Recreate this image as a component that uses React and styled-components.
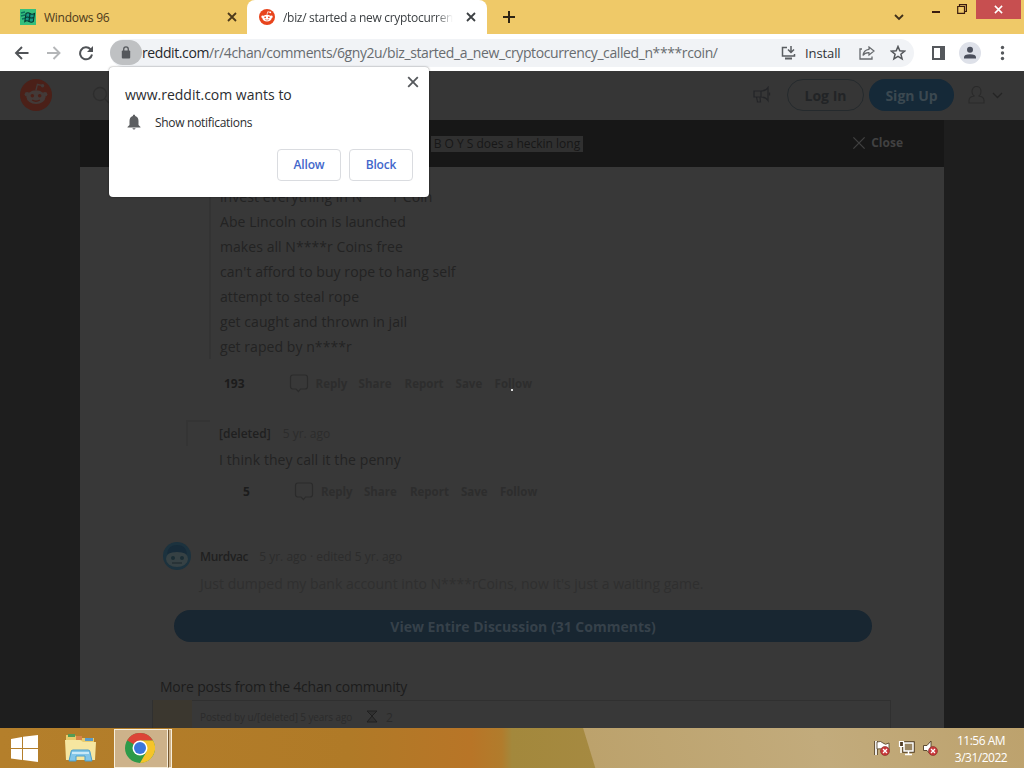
import React from 'react'
import styled, { createGlobalStyle } from 'styled-components'

const QUOTE = [
    'invest everything in N****r Coin',
    'Abe Lincoln coin is launched',
    'makes all N****r Coins free',
    "can't afford to buy rope to hang self",
    'attempt to steal rope',
    'get caught and thrown in jail',
    'get raped by n****r'
]
const ACTIONS = [
    ['Reply', 43],
    ['Share', 46],
    ['Report', 51],
    ['Save', 39],
    ['Follow', 46]
]

const Cross = ({ size, color, width = 2 }) => (
    <svg width={size} height={size} viewBox='0 0 10 10'>
        <path d='M1 1l8 8M9 1l-8 8' stroke={color} strokeWidth={width} />
    </svg>
)

const Snoo = ({ size, bg, face, eye }) => (
    <svg width={size} height={size} viewBox='0 0 20 20'>
        <circle cx='10' cy='10' r='10' fill={bg} />
        <path d='M10 7l.9-3.6 2.7.6' fill='none' stroke={face} strokeWidth='.9' />
        <circle cx='14.1' cy='4.2' r='1.1' fill={face} />
        <circle cx='4.4' cy='9.6' r='1.5' fill={face} />
        <circle cx='15.6' cy='9.6' r='1.5' fill={face} />
        <ellipse cx='10' cy='11.4' rx='5.9' ry='4.3' fill={face} />
        <circle cx='7.7' cy='10.4' r='1.1' fill={eye} />
        <circle cx='12.3' cy='10.4' r='1.1' fill={eye} />
        <path d='M7.6 13.1q2.4 1.6 4.8 0' fill='none' stroke={eye} strokeWidth='.8' />
    </svg>
)

const Win96Icon = () => (
    <svg width='16' height='16' viewBox='0 0 16 16'>
        <rect width='16' height='16' fill='#35bf7c' />
        <path d='M1 4l4-1M1 7l4-1M2 10l4-1' stroke='#0a7260' strokeWidth='1.3' />
        <path
            d='M6 4.500q2-1.400 4 0t4.500 0l-1.200 8q-2 1.400-4.200 0t-4.300 0z'
            fill='#179a86'
            stroke='#06382f'
            strokeWidth='1.100'
        />
        <path d='M10 4.500l-1 8M5.400 8.500q2-1 4 0t4.400 0' fill='none' stroke='#06382f' strokeWidth='1.200' />
    </svg>
)

const ActionRow = () => (
    <Actions>
        <svg width='20' height='20' viewBox='0 0 20 20'>
            <path
                d='M4 2h12q2.500 0 2.500 2.500v9q0 2.500-2.500 2.500h-4.500L9.500 18.500 7 16H4q-2.500 0-2.500-2.500v-9Q1.500 2 4 2z'
                fill='none'
                stroke='#2b2b2b'
                strokeWidth='1.200'
            />
        </svg>
        <div>
            {ACTIONS.map(([label, w]) => (
                <Action key={label} $w={w}>
                    {label}
                </Action>
            ))}
        </div>
    </Actions>
)

const Tabs = () => (
    <TabStrip>
        <Tab>
            <Win96Icon />
            <Txt $track={-0.25}>Windows 96</Txt>
            <Cross size={10} color='#4d3a1c' width={1.8} />
        </Tab>
        <Tab $active>
            <Snoo size={16} bg='#e8441c' face='#fff' eye='#e8441c' />
            <TabTitle>/biz/ started a new cryptocurren</TabTitle>
            <Cross size={10} color='#3c4043' width={1.8} />
        </Tab>
        <NewTab width='12' height='12' viewBox='0 0 12 12'>
            <path d='M6 0v12M0 6h12' stroke='#2e2414' strokeWidth='2' />
        </NewTab>
        <WindowButtons>
            <svg width='10' height='7' viewBox='0 0 10 7'>
                <path d='M1 1l4 4 4-4' fill='none' stroke='#40301a' strokeWidth='1.8' />
            </svg>
            <svg width='8' height='2'>
                <path d='M0 1h8' stroke='#3a1c10' strokeWidth='2' />
            </svg>
            <svg width='10' height='10' viewBox='0 0 10 10'>
                <path d='M.7 2.500h6.800v6.800H.7zM2.500 2V.6h6.900v6.900H8' fill='none' stroke='#3a1c10' strokeWidth='1.2' />
            </svg>
            <CloseWindow>
                <Cross size={9} color='#fff' width={1.7} />
            </CloseWindow>
        </WindowButtons>
    </TabStrip>
)

const AddressBar = () => (
    <Toolbar>
        <NavIcons width='80' height='16' viewBox='0 0 80 16'>
            <path d='M14.500 8H2M8 2L2 8l6 6' fill='none' stroke='#505357' strokeWidth='1.900' />
            <path d='M33 8h12.500M39.500 2l6 6-6 6' fill='none' stroke='#b4b6b8' strokeWidth='1.900' />
            <path d='M76.500 4.200A6 6 0 1 0 78 9.500' fill='none' stroke='#505357' strokeWidth='2' />
            <path d='M79 1v6h-6z' fill='#505357' />
        </NavIcons>
        <Omnibox>
            <Lock>
                <svg width='10' height='13' viewBox='0 0 10 13'>
                    <rect x='.8' y='4.500' width='8.400' height='8' rx='1' fill='#55585c' />
                    <path d='M2.700 5V3.200a2.300 2.300 0 0 1 4.600 0V5' fill='none' stroke='#55585c' strokeWidth='1.300' />
                </svg>
            </Lock>
            <Url>
                <b>reddit.com</b>/r/4chan/comments/6gny2u/biz_started_a_new_cryptocurrency_called_n****rcoin/
            </Url>
            <svg width='15' height='14' viewBox='0 0 15 14'>
                <path d='M6 1.500H1.500v8.500h12V8' fill='none' stroke='#5a5d61' strokeWidth='1.500' />
                <path d='M10 0v6M7 3.500l3 3 3-3' fill='none' stroke='#5a5d61' strokeWidth='1.500' />
                <path d='M4 12.500h7' stroke='#5a5d61' strokeWidth='2' />
            </svg>
            <Install>Install</Install>
            <svg width='16' height='14' viewBox='0 0 16 14'>
                <path d='M3 3H1v10h12v-2.500' fill='none' stroke='#66696d' strokeWidth='1.300' />
                <path d='M10 1l5 4-5 4V6.700Q6 6.500 4 9.500 4.500 4 10 3.300z' fill='none' stroke='#66696d' strokeWidth='1.200' />
            </svg>
            <Star width='16' height='16' viewBox='0 0 16 16'>
                <path
                    d='M8 1.500l1.800 4.300 4.700.4-3.600 3 1.200 4.600L8 11.300l-4.100 2.500 1.200-4.600-3.600-3 4.700-.4z'
                    fill='none'
                    stroke='#55585c'
                    strokeWidth='1.500'
                />
            </Star>
        </Omnibox>
        <BarIcons width='80' height='22' viewBox='0 0 80 22'>
            <path d='M3 5h11v12H3z' fill='#fff' stroke='#55585c' strokeWidth='2' />
            <path d='M10 4h5v14h-5z' fill='#55585c' />
            <circle cx='40' cy='11' r='11' fill='#dee1e9' />
            <circle cx='40' cy='7.700' r='3' fill='#4b4f5c' />
            <path d='M34 16.500v-1.200q0-3 6-3t6 3v1.200z' fill='#4b4f5c' />
            <circle cx='72.500' cy='5.500' r='1.700' fill='#55585c' />
            <circle cx='72.500' cy='11' r='1.700' fill='#55585c' />
            <circle cx='72.500' cy='16.500' r='1.700' fill='#55585c' />
        </BarIcons>
    </Toolbar>
)

const PermissionPrompt = () => (
    <Prompt>
        <DismissButton>
            <Cross size={12} color='#55585c' width={1.500} />
        </DismissButton>
        <PromptTitle>www.reddit.com wants to</PromptTitle>
        <PromptRow>
            <svg width='14' height='16' viewBox='0 0 14 16'>
                <path
                    d='M7 .5q1.200 0 1.200 1.500Q11.500 3 11.500 7v4l2 2v.6H.5V13l2-2V7q0-4 3.300-5Q5.800.5 7 .5zM5.400 14.200h3.200Q8.300 15.600 7 15.600t-1.600-1.400z'
                    fill='#5c5e61'
                />
            </svg>
            <Txt $track={-0.3}>Show notifications</Txt>
        </PromptRow>
        <PromptButtons>
            <PromptButton>Allow</PromptButton>
            <PromptButton>Block</PromptButton>
        </PromptButtons>
    </Prompt>
)

const RedditHeader = () => (
    <SiteHeader>
        <Snoo size={32} bg='#4b2018' face='#433a38' eye='#4b2018' />
        <Search width='18' height='18' viewBox='0 0 18 18'>
            <circle cx='8' cy='8' r='6.500' fill='none' stroke='#2d2d2d' strokeWidth='1.300' />
            <path d='M13 13l4 4' stroke='#2d2d2d' strokeWidth='1.300' />
        </Search>
        <Horn width='18' height='18' viewBox='0 0 18 18'>
            <path
                d='M1 5h7q5 0 7-3.500v13Q13 11 8 11H1zM3.500 11l1 5h3l-.5-5M8 5v6M16.500 6.500v3'
                fill='none'
                stroke='#242528'
                strokeWidth='1.200'
            />
        </Horn>
        <LogIn>Log In</LogIn>
        <SignUp>Sign Up</SignUp>
        <UserMenu width='36' height='20' viewBox='0 0 36 20'>
            <path
                d='M5 6a4.500 4.500 0 0 1 9 0q0 4-2.500 5 5.500.5 5.500 4.500v2.500H2v-2.500Q2 11.500 7.500 11 5 10 5 6z'
                fill='none'
                stroke='#2a2a2a'
                strokeWidth='1.100'
            />
            <path d='M26 8l4.500 4.500L35 8' fill='none' stroke='#242424' strokeWidth='1.300' />
        </UserMenu>
    </SiteHeader>
)

const Comments = () => (
    <Sheet>
        <Quote>
            {QUOTE.map((line) => (
                <p key={line}>{line}</p>
            ))}
        </Quote>
        <VoteRow $top={14} $left={144}>
            <Score>193</Score>
            <ActionRow />
        </VoteRow>
        <DeletedComment>
            <GhostAvatar />
            <Meta>
                <b>[deleted]</b>
                <time>5 yr. ago</time>
            </Meta>
        </DeletedComment>
        <Body>I think they call it the penny</Body>
        <VoteRow $top={11} $left={163} $gap={44}>
            <Score>5</Score>
            <ActionRow />
        </VoteRow>
        <UserComment>
            <svg width='30' height='30' viewBox='0 0 30 30'>
                <circle cx='15' cy='15' r='14' fill='#1c323e' />
                <ellipse cx='15' cy='18' rx='11' ry='8' fill='#364144' />
                <path d='M5 13Q6 4 15 4t10 9q-10-4-20 0z' fill='#172b39' />
                <circle cx='11' cy='17' r='2' fill='#1b2d35' />
                <circle cx='20' cy='17' r='2' fill='#1b2d35' />
                <path d='M10 22h10' stroke='#252f33' strokeWidth='1.500' />
            </svg>
            <Meta $gap={11}>
                <Txt as='b' $track={-0.35}>
                    Murdvac
                </Txt>
                <time>5 yr. ago · edited 5 yr. ago</time>
            </Meta>
        </UserComment>
        <FadedBody>Just dumped my bank account into N****rCoins, now it's just a waiting game.</FadedBody>
        <ViewAll>View Entire Discussion (31 Comments)</ViewAll>
        <MoreTitle>More posts from the 4chan community</MoreTitle>
        <PostCard>
            <Thumb />
            <Byline>Posted by u/[deleted] 5 years ago</Byline>
            <svg width='12' height='14' viewBox='0 0 12 14'>
                <path d='M1 1h10L6 6l5 6H1l5-6z' fill='#303030' stroke='#202020' />
            </svg>
            <span>2</span>
        </PostCard>
    </Sheet>
)

const ErrorBadge = ({ x, y }) => (
    <g transform={`translate(${x} ${y})`}>
        <circle r='4.500' fill='#c9383b' stroke='#7e3027' strokeWidth='.6' />
        <path d='M-2-2l4 4M2-2l-4 4' stroke='#fff' strokeWidth='1.300' />
    </g>
)

const Taskbar = () => (
    <Bar>
        <StartLogo width='27' height='27' viewBox='0 0 27 27'>
            <path d='M0 4l11-2v11H0zM12 1.800L27 0v13H12zM0 14h11v11L0 23.500zM12 14h15v13l-15-2z' fill='#fff' />
        </StartLogo>
        <Folder width='33' height='30' viewBox='0 0 33 30'>
            <path d='M2 2h9l2 3h17v22H2z' fill='#e8cc6d' />
            <path d='M4 1h7v3H4z' fill='#549b55' />
            <path d='M12 3h6v4h-6z' fill='#d88448' />
            <path d='M21 5h8v3h-8z' fill='#5b9bc7' />
            <path d='M1 7h15l3 2h13l-1 18H2z' fill='#f6e6a0' />
            <path d='M5 28l2-9q0-2 2-2h15q2 0 2 2l2 9h-7v-5h-9v5z' fill='#83c6e8' stroke='#4b9fcc' />
            <path d='M8 20h17' stroke='#c9e9f7' strokeWidth='2' />
        </Folder>
        <ActiveApp>
            <svg width='30' height='30' viewBox='0 0 30 30'>
                <circle cx='15' cy='15' r='15' fill='#2e9a49' />
                <path d='M15 15L2 7.500A15 15 0 0 1 28 7.500H15z' fill='#dc4437' />
                <path d='M15 7.500h13A15 15 0 0 1 15 30l6.500-11.300z' fill='#f5c429' />
                <path d='M2 7.500L8.500 18.800 15 15z' fill='#2e9a49' />
                <circle cx='15' cy='15' r='7.500' fill='#fff' />
                <circle cx='15' cy='15' r='6' fill='#3b76dc' />
            </svg>
        </ActiveApp>
        <AppStack />
        <Tray width='66' height='18' viewBox='0 0 66 18'>
            <path d='M2 2v14' stroke='#4f3c25' strokeWidth='3.500' />
            <path d='M2 2v14' stroke='#fff' strokeWidth='1.800' />
            <path d='M3 3q4-1.500 6 1t6 0v7q-4 2-6 0t-6-1z' fill='#fff' stroke='#4f3c25' strokeWidth='.8' />
            <ErrorBadge x={11} y={12} />
            <path d='M30 4h9v8h-9z' fill='#9b8764' stroke='#4f3c25' strokeWidth='3.500' />
            <path d='M30 4h9v8h-9zM34.500 12v3M31 15.500h7M27 6v8' fill='#9b8764' stroke='#fff' strokeWidth='1.500' />
            <path d='M25.500 2.500h4v5h-4z' fill='#4f3c25' stroke='#fff' strokeWidth='1.200' />
            <path d='M49.500 6.500H53L57 2v14l-4-4.500h-3.500z' fill='#fff' stroke='#4f3c25' strokeWidth='.9' />
            <ErrorBadge x={59} y={12} />
        </Tray>
        <Clock>
            <span>11:56 AM</span>
            <span>3/31/2022</span>
        </Clock>
    </Bar>
)

const App = () => (
    <Desktop>
        <Global />
        <Tabs />
        <AddressBar />
        <RedditHeader />
        <Overlay>
            <PostBar>
                <PostTitle>B O Y S does a heckin long</PostTitle>
                <ClosePost>
                    <Cross size={14} color='#414141' width={0.9} />
                    <span>Close</span>
                </ClosePost>
            </PostBar>
            <Comments />
        </Overlay>
        <Taskbar />
        <PermissionPrompt />
        <Pointer />
    </Desktop>
)
export default App

const Global = createGlobalStyle`
    * {
        box-sizing: border-box;
    }

    body {
        margin: 0;
        overflow: hidden;
        font-family: 'Open Sans', 'Noto Sans', sans-serif;
        font-size: 12px;
    }

    svg {
        display: block;
        flex-shrink: 0;
    }

    p {
        margin: 0;
    }
`

const Desktop = styled.div`
    position: relative;
    display: flex;
    flex-direction: column;
    width: 1024px;
    height: 768px;
    overflow: hidden;
    background: #1e1e1e;
`

const Txt = styled.span`
    letter-spacing: ${({ $track }) => $track}px;
    white-space: nowrap;
`

const TabStrip = styled.div`
    display: flex;
    align-items: center;
    height: 34px;
    flex-shrink: 0;
    background: #efc968;
`

const Tab = styled.div`
    display: flex;
    align-items: center;
    gap: 8px;
    width: ${({ $active }) => ($active ? 240 : 247)}px;
    height: 34px;
    padding: 0 ${({ $active }) => ($active ? 11 : 10)}px 0 ${({ $active }) => ($active ? 12 : 20)}px;
    border-radius: 8px 8px 0 0;
    background: ${({ $active }) => ($active ? '#fff' : 'transparent')};
    color: ${({ $active }) => ($active ? '#3c4043' : '#4d3a1c')};

    > svg:last-child {
        margin-left: auto;
    }
`

const TabTitle = styled.span`
    letter-spacing: -0.3px;
    white-space: nowrap;
    mask-image: linear-gradient(90deg, #000 90%, transparent);
`

const NewTab = styled.svg`
    margin-left: 16px;
`

const WindowButtons = styled.div`
    display: flex;
    align-items: flex-start;
    height: 34px;
    margin-left: auto;

    > svg:nth-child(1) {
        margin: 14px 28px 0 0;
    }

    > svg:nth-child(2) {
        margin: 11px 17px 0 0;
    }

    > svg:nth-child(3) {
        margin: 4px 9px 0 0;
    }
`

const CloseWindow = styled.div`
    display: flex;
    align-items: center;
    justify-content: center;
    width: 45px;
    height: 19px;
    margin-right: 3px;
    background: #c74f50;
`

const Toolbar = styled.div`
    display: flex;
    align-items: center;
    height: 37px;
    flex-shrink: 0;
    background: #fff;
`

const NavIcons = styled.svg`
    margin-left: 14px;
`

const Omnibox = styled.div`
    display: flex;
    align-items: center;
    width: 804px;
    height: 28px;
    margin-left: 16px;
    border-radius: 14px;
    background: #f1f3f6;
`

const Lock = styled.div`
    display: flex;
    align-items: center;
    justify-content: center;
    width: 32px;
    height: 25px;
    border-radius: 13px;
    background: #bfc1c3;
`

const Url = styled.div`
    width: 639px;
    font-size: 14px;
    letter-spacing: -0.4px;
    white-space: nowrap;
    color: #686c70;

    b {
        font-weight: 400;
        color: #25282b;
    }
`

const Install = styled.span`
    width: 36px;
    margin: 0 18px 0 9px;
    font-size: 13px;
    letter-spacing: -0.1px;
    color: #303338;
`

const Star = styled.svg`
    margin-left: 15px;
`

const BarIcons = styled.svg`
    margin-left: 16px;
`

const SiteHeader = styled.div`
    display: flex;
    align-items: center;
    height: 49px;
    flex-shrink: 0;
    padding: 0 0 1px 20px;
    background: #363636;
    font-weight: 700;
    font-size: 14px;
`

const Search = styled.svg`
    margin-left: 40px;
`

const Horn = styled.svg`
    margin-left: auto;
`

const Pill = styled.div`
    display: flex;
    align-items: center;
    justify-content: center;
    height: 32px;
    border-radius: 16px;
`

const LogIn = styled(Pill)`
    width: 77px;
    margin-left: 16px;
    border: 1px solid #252a2d;
    color: #222426;
`

const SignUp = styled(Pill)`
    width: 85px;
    margin-left: 5px;
    background: #152938;
    color: #3b4850;
`

const UserMenu = styled.svg`
    margin: 0 21px 0 13px;
`

const Overlay = styled.div`
    display: flex;
    flex-direction: column;
    width: 864px;
    height: 608px;
    flex-shrink: 0;
    margin: 0 auto;
    overflow: hidden;
`

const PostBar = styled.div`
    display: flex;
    align-items: center;
    justify-content: flex-end;
    height: 47px;
    flex-shrink: 0;
    padding-right: 41px;
    background: #171717;
`

const PostTitle = styled.span`
    height: 16px;
    padding: 0 3px;
    line-height: 16px;
    background: #303030;
    color: #171717;
    white-space: nowrap;
`

const ClosePost = styled.div`
    display: flex;
    align-items: center;
    gap: 5px;
    margin-left: 269px;
    padding-bottom: 2px;
    font-weight: 700;
    color: #414141;
`

const Sheet = styled.div`
    height: 561px;
    overflow: hidden;
    background: #383838;
    color: #232323;
`

const Quote = styled.div`
    margin: 17px 0 0 129px;
    padding-left: 9px;
    border-left: 2px solid #333;
    font-size: 14px;
    line-height: 25px;
    letter-spacing: 0.06px;
`

const VoteRow = styled.div`
    display: flex;
    align-items: center;
    gap: ${({ $gap }) => $gap || 44}px;
    height: 20px;
    margin: ${({ $top }) => $top}px 0 0 ${({ $left }) => $left}px;
`

const Score = styled.b`
    font-size: 12px;
    color: #1c1c1c;
`

const Actions = styled.div`
    display: flex;
    align-items: center;
    gap: 7px;

    > div {
        display: flex;
    }
`

const Action = styled.span`
    width: ${({ $w }) => $w}px;
    font-size: 11.5px;
    font-weight: 700;
    color: #2d2d2d;
`

const DeletedComment = styled.div`
    display: flex;
    align-items: center;
    gap: 9px;
    height: 28px;
    margin: 26px 0 0 106px;
`

const GhostAvatar = styled.div`
    width: 24px;
    height: 26px;
    border-top: 2px solid #343434;
    border-left: 2px solid #343434;
`

const Meta = styled.div`
    display: flex;
    align-items: center;
    gap: ${({ $gap }) => $gap || 12}px;
    font-size: 12px;

    b {
        font-weight: 600;
        color: #202020;
    }

    time {
        color: #2c2c2c;
    }
`

const Body = styled.div`
    margin: 3px 0 0 139px;
    font-size: 14px;
    line-height: 20px;
    letter-spacing: 0.08px;
`

const UserComment = styled.div`
    display: flex;
    align-items: center;
    gap: 8px;
    margin: 40px 0 0 82px;
`

const FadedBody = styled.div`
    margin: 3px 0 0 120px;
    font-size: 14px;
    line-height: 20px;
    color: #2f2f2f;
`

const ViewAll = styled(Pill)`
    width: 698px;
    margin: 16px 0 0 94px;
    background: #182631;
    color: #36414a;
    font-size: 14px;
    font-weight: 700;
`

const MoreTitle = styled.div`
    margin: 35px 0 0 80px;
    font-size: 14px;
    line-height: 20px;
    letter-spacing: -0.22px;
    color: #1c1c1c;
`

const PostCard = styled.div`
    display: flex;
    align-items: center;
    gap: 8px;
    width: 739px;
    height: 34px;
    margin: 3px 0 0 72px;
    border: 1px solid #303030;
    color: #2b2b2b;
`

const Byline = styled.span`
    width: 158px;
    font-size: 10px;
    letter-spacing: -0.1px;
    white-space: nowrap;
`

const Thumb = styled.div`
    width: 39px;
    height: 34px;
    background: #3b372f;
`

const Bar = styled.div`
    display: flex;
    align-items: center;
    height: 40px;
    flex-shrink: 0;
    background:
        linear-gradient(73deg, transparent 57.4%, #bca26c 57.5%, #c2ab7c 80%, #bda26d),
        linear-gradient(90deg, #b47f2b, #b07a27 34%, #b87527 46%, #b17c2c 49%, #a3883c 50%, #a68a42 60%);
`

const StartLogo = styled.svg`
    margin-left: 11px;
`

const Folder = styled.svg`
    margin-left: 26px;
`

const ActiveApp = styled.div`
    display: flex;
    align-items: center;
    justify-content: center;
    width: 54px;
    height: 39px;
    margin-left: 17px;
    padding-right: 2px;
    border: 1px solid #f7efdc;
    background: #cdb28a;
`

const AppStack = styled.div`
    width: 4px;
    height: 39px;
    border: 1px solid #f7efdc;
    border-left: 1px solid #76572f;
    background: #cdb28a;
`

const Tray = styled.svg`
    margin-left: auto;
`

const Clock = styled.div`
    display: flex;
    flex-direction: column;
    align-items: center;
    width: 56px;
    margin: 2px 15px 0 13px;
    color: #fff;
    line-height: 17px;
    letter-spacing: -0.5px;
`

const Prompt = styled.div`
    position: absolute;
    top: 67px;
    left: 109px;
    width: 320px;
    height: 130px;
    padding: 18px 16px 16px;
    border-radius: 4px;
    background: #fff;
    box-shadow: 0 0 2px rgba(0, 0, 0, 0.5);
    color: #2b2d30;
`

const DismissButton = styled.div`
    position: absolute;
    top: 9px;
    right: 10px;
`

const PromptTitle = styled.div`
    font-size: 14px;
    line-height: 20px;
`

const PromptRow = styled.div`
    display: flex;
    align-items: center;
    gap: 14px;
    height: 16px;
    margin: 9px 0 0 2px;
`

const PromptButtons = styled.div`
    display: flex;
    justify-content: flex-end;
    gap: 8px;
    margin-top: 19px;
`

const PromptButton = styled.div`
    width: 64px;
    height: 32px;
    border: 1px solid #dadce0;
    border-radius: 4px;
    line-height: 30px;
    text-align: center;
    font-weight: 600;
    letter-spacing: -0.15px;
    color: #4267cb;
`

const Pointer = styled.i`
    position: absolute;
    top: 389px;
    left: 511px;
    width: 2px;
    height: 2px;
    background: #ddd;
`
